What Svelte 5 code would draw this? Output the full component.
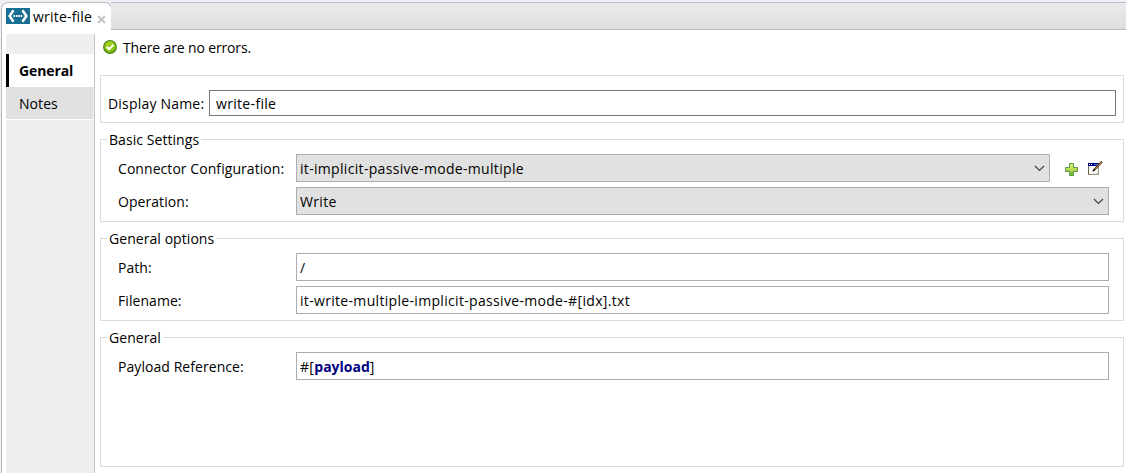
<script>
  const pages = ['General', 'Notes'];
  let active = $state('General');
</script>

{#snippet chevron()}
  <svg class="chevron" width="11" height="7" viewBox="0 0 11 7"><path d="M1 1 5.5 5.5 10 1" fill="none" stroke="#404040" stroke-width="1.1" /></svg>
{/snippet}

<div class="view">
  <header class="strip">
    <div class="tab">
      <svg width="24" height="16" viewBox="0 0 24 16">
        <rect width="24" height="16" fill="#176d92" />
        <path d="M7.5 2.2 3.6 8l3.9 5.8M16.5 2.2 20.4 8l-3.9 5.8" fill="none" stroke="#fff" stroke-width="2.5" />
        <path d="M7.5 8h9" stroke="#fff" stroke-width="1.8" stroke-dasharray="1.6 .8" />
      </svg>
      <span class="title">write-file</span>
      <svg class="close" width="9" height="9" viewBox="0 0 9 9"><path d="m1 1 7 7m0-7L1 8" stroke="#c4c4c4" stroke-width="2.2" /></svg>
    </div>
    <div class="rest"></div>
  </header>

  <div class="body">
    <nav>
      {#each pages as page}
        <button class:active={active === page} onclick={() => (active = page)}>{page}</button>
      {/each}
    </nav>

    <main>
      <div class="status">
        <svg width="14" height="14" viewBox="0 0 14 14">
          <defs><linearGradient id="ok" x2="0" y2="1"><stop stop-color="#a8d61c" /><stop offset="1" stop-color="#78b80c" /></linearGradient></defs>
          <circle cx="7" cy="7" r="6.3" fill="url(#ok)" stroke="#4d8a19" stroke-width="1.3" />
          <path d="m3.7 6.7 2.4 2.5 4.3-4.4" fill="none" stroke="#fff" stroke-width="2" />
        </svg>
        <span class="msg">There are no errors.</span>
      </div>

      <section class="name">
        <span class="lbl">Display Name:</span>
        <div class="field dark">write-file</div>
      </section>

      <section class="group">
        <h2>Basic Settings</h2>
        <div class="row">
          <span class="lbl">Connector Configuration:</span>
          <div class="field combo"><span>it-implicit-passive-mode-multiple</span>{@render chevron()}</div>
          <div class="tools">
            <svg width="14" height="14" viewBox="0 0 14 14">
              <defs><linearGradient id="add" x2="0" y2="1"><stop stop-color="#e5ef72" /><stop offset=".5" stop-color="#b8dc50" /><stop offset="1" stop-color="#66b32d" /></linearGradient></defs>
              <path d="M5.5 1.5h4v4h4v4h-4v4h-4v-4h-4v-4h4z" fill="url(#add)" stroke="#5c9a4b" />
            </svg>
            <svg width="16" height="15" viewBox="0 0 16 15">
              <path d="M1.5 4v9.5h10V4" fill="#fff" stroke="#65604c" />
              <path d="M2 13h9V6" fill="none" stroke="#d5d0bd" />
              <path d="M1 2h11v3H1z" fill="#000080" />
              <path d="M2 3.5h3" stroke="#fff" stroke-dasharray="1 1" />
              <path d="M7 3.5h4" stroke="#1c86e8" />
              <path d="M15 .6 7 9" stroke="#49301c" stroke-width="2.2" />
              <path d="M14.5 1 7.8 8" stroke="#d79a4c" />
              <path d="m7.8 8.2-2 2" stroke="#111" stroke-width="1.3" />
            </svg>
          </div>
        </div>
        <div class="row">
          <span class="lbl">Operation:</span>
          <div class="field combo"><span>Write</span>{@render chevron()}</div>
        </div>
      </section>

      <section class="group">
        <h2>General options</h2>
        <div class="row"><span class="lbl">Path:</span><div class="field">/</div></div>
        <div class="row"><span class="lbl">Filename:</span><div class="field">it-write-multiple-implicit-passive-mode-#[idx].txt</div></div>
      </section>

      <section class="group four">
        <h2>General</h2>
        <div class="row"><span class="lbl">Payload Reference:</span><div class="field">#[<b>payload</b>]</div></div>
      </section>
    </main>
  </div>
</div>

<style>
  :global(body) { background: #fff; }
  * { box-sizing: border-box; }
  .view {
    height: 473px;
    display: flex;
    flex-direction: column;
    overflow: hidden;
    padding: 2px 0 0 1px;
    background: #f0f0f0;
    font: 14px/20px 'Open Sans', 'Noto Sans', sans-serif;
    letter-spacing: .06px;
    color: #000;
    white-space: nowrap;
  }
  .strip { display: flex; height: 28px; flex: none; }
  .tab {
    width: 111px;
    display: flex;
    align-items: center;
    padding: 0 0 1px 4px;
    border: 1px solid #b6bccc;
    border-bottom: 0;
    border-radius: 7px 7px 0 0;
    background: #fff;
  }
  .title { margin: 2px 0 0 3px; width: 61px; letter-spacing: .2px; }
  .close { margin: 6px 0 0 3px; flex: none; }
  .rest {
    flex: 1;
    margin-left: -1px;
    border-top: 1px solid #b0bdd6;
    border-bottom: 1px solid #b9b9c8;
    background: linear-gradient(#ebebeb, #dfdfdf);
  }
  .body { flex: 1; display: flex; background: #fff; border-left: 1px solid #b9b9c8; padding: 4px 2px 0 4px; }
  nav { width: 89px; flex: none; background: #efefef; border-right: 1px solid #c6c6c6; padding-top: 20px; }
  nav button {
    display: block;
    width: 87px;
    height: 33px;
    border: 0;
    border-bottom: 1px solid #fff;
    padding: 1px 0 0 13px;
    text-align: left;
    font: inherit;
    letter-spacing: inherit;
    background: #e1e1e1;
    color: #000;
  }
  nav button.active {
    width: 88px;
    font-weight: 700;
    letter-spacing: -.1px;
    background: #fff;
    border-left: 3px solid #000;
    border-bottom: 0;
    padding: 0 0 0 10px;
  }
  main { flex: 1; padding-left: 5px; min-width: 0; }
  .status { height: 41px; display: flex; align-items: flex-start; padding: 4px 0 0 3px; }
  .status svg { margin-top: 2px; }
  .msg { margin: 0 0 0 6px; letter-spacing: -.14px; }
  section { border: 1px solid #dcdcdc; }
  .name { height: 48px; display: flex; align-items: center; padding: 7px 7px 0 7px; }
  .name .lbl { width: 101px; flex: none; padding-top: 2px; letter-spacing: .2px; }
  .field {
    flex: 1;
    height: 28px;
    border: 1px solid #abadb3;
    padding: 4px 3px 2px;
    background: #fff;
    letter-spacing: .32px;
  }
  .field.dark { height: 26px; border-color: #7a7a7a; padding: 3px 6px 1px; }
  .group { margin-top: 16px; padding: 0 14px 0 17px; height: 83px; }
  .four { height: 130px; }
  h2 {
    width: max-content;
    margin: -10px 0 4px -11px;
    padding: 0 2px;
    background: #fff;
    font: inherit;
  }
  .row { display: flex; height: 28px; margin-bottom: 5px; }
  .row .lbl { width: 178px; flex: none; padding-top: 5px; }
  .combo { display: flex; justify-content: space-between; background: #e1e1e1; border-color: #adadad; }
  .chevron { margin: 6px 1px 0 0; }
  .tools { width: 59px; flex: none; padding: 8px 0 0 14px; display: flex; gap: 9px; }
  .tools svg:last-child { margin-top: -1px; }
  b { color: #000080; letter-spacing: 0; }
</style>
